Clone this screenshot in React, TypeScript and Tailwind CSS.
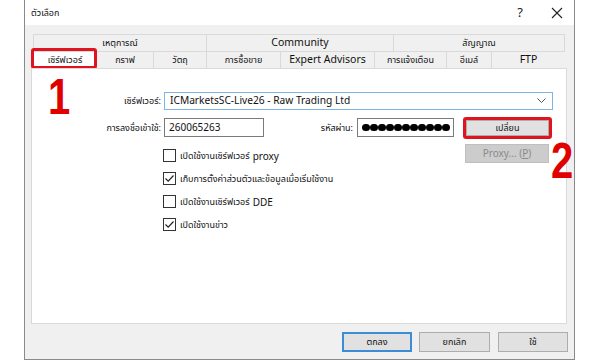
import React from "react";

const font = { fontFamily: '"Noto Sans", "Open Sans", "Noto Sans Thai", Tahoma, sans-serif' };
const bigFont = { fontFamily: '"Liberation Sans", Arial, sans-serif' };

function Check({ checked, label, latin }: { checked: boolean; label: string; latin?: string }) {
  return (
    <div className="flex items-center h-[23px]">
      <div className="w-[13px] h-[13px] border border-[#333] bg-white flex items-center justify-center">
        {checked && (
          <svg width="11" height="11" viewBox="0 0 11 11">
            <path d="M1.5 5.5 L4.2 8.2 L9.5 2.5" fill="none" stroke="#222" strokeWidth="1.2" />
          </svg>
        )}
      </div>
      <span className="ml-[4px] text-[9px] text-[#111] leading-none">{label}</span>
      {latin && <span className="ml-[3px] text-[10px] text-[#111] leading-none">{latin}</span>}
    </div>
  );
}

export default function App() {
  const top = [
    { t: "เหตุการณ์", w: 173, th: true },
    { t: "Community", w: 187, th: false },
    { t: "สัญญาณ", w: 172, th: true },
  ];
  const bottom = [
    { t: "เซิร์ฟเวอร์", w: 63, th: true },
    { t: "กราฟ", w: 57, th: true },
    { t: "วัตถุ", w: 53, th: true },
    { t: "การซื้อขาย", w: 74, th: true },
    { t: "Expert Advisors", w: 94, th: false },
    { t: "การแจ้งเตือน", w: 72, th: true },
    { t: "อีเมล์", w: 45, th: true },
    { t: "FTP", w: 74, th: false },
  ];
  return (
    <div className="w-[600px] h-[360px] bg-white overflow-hidden" style={font}>
      <div className="ml-[24px] w-[551px] h-[360px] border-x border-b border-[#8a8a8a] flex flex-col relative">
        {/* title bar */}
        <div className="h-[25px] bg-white flex items-center pl-[6px] shrink-0">
          <span className="text-[9px] text-[#111]">ตัวเลือก</span>
          <span className="ml-auto text-[13px] text-[#222] mr-[28px]">?</span>
          <svg width="12" height="12" viewBox="0 0 12 12" className="mr-[11px]">
            <path d="M1 1 L11 11 M11 1 L1 11" stroke="#222" strokeWidth="1.1" />
          </svg>
        </div>
        {/* body */}
        <div className="flex-1 bg-[#f0f0f0] flex flex-col">
          <div className="pt-[9px] pl-[7px]">
            {/* tabs */}
            <div className="flex h-[17px] w-[532px] ml-[1px]">
              {top.map((x, i) => (
                <div
                  key={i}
                  style={{ width: x.w }}
                  className={
                    "border-t border-l border-[#d9d9d9] last:border-r flex items-center justify-center text-[#111] bg-[#f0f0f0] " +
                    (x.th ? "text-[9px]" : "text-[10.5px]")
                  }
                >
                  {x.t}
                </div>
              ))}
            </div>
            <div className="flex h-[17px] w-[532px] ml-[1px] relative">
              {bottom.map((x, i) => (
                <div
                  key={i}
                  style={{ width: x.w }}
                  className={
                    "border-t border-l border-[#d9d9d9] last:border-r flex items-center justify-center text-[#111] " +
                    (i === 0 ? "bg-white " : "bg-[#f0f0f0] ") +
                    (x.th ? "text-[9px]" : "text-[10.5px]")
                  }
                >
                  {x.t}
                </div>
              ))}
              <div className="absolute left-[-2px] top-[-3px] w-[66px] h-[21px] border-[3px] border-[#e0141e] rounded-[3px]" />
            </div>
          </div>
          {/* panel */}
          <div className="ml-[6px] w-[536px] h-[256px] bg-white border border-[#d9d9d9] relative pt-[23px]">
            <div className="absolute left-[16px] top-[3px] text-[50px] font-black leading-none text-[#e00000] scale-x-[0.8] origin-left" style={bigFont}>
              1
            </div>
            {/* server row */}
            <div className="flex items-center h-[18px]">
              <div className="w-[129px] text-right text-[9px] text-[#111]">เซิร์ฟเวอร์:</div>
              <div className="ml-[3px] w-[389px] h-[18px] border border-[#7fb5e6] flex items-center px-[5px]">
                <span className="text-[10.2px] text-[#111]">ICMarketsSC-Live26 - Raw Trading Ltd</span>
                <svg width="9" height="6" viewBox="0 0 9 6" className="ml-auto mr-[1px]">
                  <path d="M0.5 0.5 L4.5 4.5 L8.5 0.5" fill="none" stroke="#555" strokeWidth="1" />
                </svg>
              </div>
            </div>
            {/* login row */}
            <div className="flex items-center h-[19px] mt-[8px]">
              <div className="w-[129px] text-right text-[9px] text-[#111]">การลงชื่อเข้าใช้:</div>
              <div className="ml-[3px] w-[100px] h-[19px] border border-[#7a7a7a] flex items-center px-[4px] text-[10px] text-[#111]">
                260065263
              </div>
              <div className="w-[89px] text-right text-[9px] text-[#111]">รหัสผ่าน:</div>
              <div className="ml-[4px] w-[97px] h-[19px] border border-[#7a7a7a] flex items-center gap-[0.5px] px-[4px]">
                {Array.from({ length: 11 }).map((_, i) => (
                  <div key={i} className="w-[7.5px] h-[7.5px] rounded-full bg-black shrink-0" />
                ))}
              </div>
              <div className="ml-[9px] w-[89px] h-[22px] border-[3px] border-[#e0141e] rounded-[3px] flex items-center justify-center">
                <div className="w-[83px] h-[16px] bg-[#e1e1e1] border border-[#adadad] flex items-center justify-center text-[9px] text-[#111]">
                  เปลี่ยน
                </div>
              </div>
            </div>
            {/* checkboxes + proxy */}
            <div className="flex mt-[7px]">
              <div className="ml-[131px] flex flex-col">
                <Check checked={false} label="เปิดใช้งานเซิร์ฟเวอร์" latin="proxy" />
                <Check checked={true} label="เก็บการตั้งค่าส่วนตัวและข้อมูลเมื่อเริ่มใช้งาน" />
                <Check checked={false} label="เปิดใช้งานเซิร์ฟเวอร์" latin="DDE" />
                <Check checked={true} label="เปิดใช้งานข่าว" />
              </div>
              <div className="ml-auto mr-[17px] w-[84px] h-[19px] bg-[#cccccc] border border-[#bfbfbf] flex items-center justify-center text-[10px] text-[#8a8a8a]">
                Proxy... (<span className="underline">P</span>)
              </div>
            </div>
          </div>
          {/* bottom buttons */}
          <div className="flex justify-end mt-[8px] mr-[6px] gap-[7px]">
            <div className="w-[70px] h-[20px] bg-[#e1e1e1] border-2 border-[#3c8cd6] flex items-center justify-center text-[9px] text-[#111]">
              ตกลง
            </div>
            <div className="w-[71px] h-[20px] bg-[#e1e1e1] border border-[#adadad] flex items-center justify-center text-[9px] text-[#111]">
              ยกเลิก
            </div>
            <div className="ml-[1px] w-[70px] h-[20px] bg-[#e1e1e1] border border-[#adadad] flex items-center justify-center text-[9px] text-[#111]">
              ใช้
            </div>
          </div>
        </div>
        <div className="absolute left-[526px] top-[136px] text-[50px] font-black leading-none text-[#e00000] scale-x-[0.8] origin-left" style={bigFont}>
          2
        </div>
      </div>
    </div>
  );
}
